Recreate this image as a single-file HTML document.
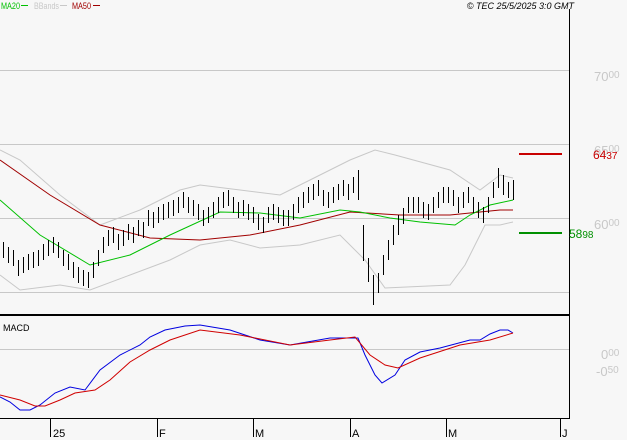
<!DOCTYPE html><html><head><style>body{margin:0;background:#f7f7f7}svg{display:block}text{font-family:"Liberation Sans",sans-serif}</style></head><body>
<svg width="627" height="440" viewBox="0 0 627 440" xmlns="http://www.w3.org/2000/svg">
<rect width="627" height="440" fill="#f7f7f7"/>
<g stroke="#c8c8c8" stroke-width="1">
<line x1="0" y1="70.5" x2="569" y2="70.5"/><line x1="0" y1="144.5" x2="569" y2="144.5"/><line x1="0" y1="218.5" x2="569" y2="218.5"/><line x1="0" y1="292.5" x2="569" y2="292.5"/><line x1="0" y1="349.5" x2="569" y2="349.5"/>
</g>
<g fill="#c8c8c8" font-size="13"><text x="594" y="81">70<tspan font-size="10" dy="-3">00</tspan></text><text x="594" y="155">65<tspan font-size="10" dy="-3">00</tspan></text><text x="594" y="229">60<tspan font-size="10" dy="-3">00</tspan></text><text x="601" y="359">0<tspan font-size="10" dy="-3">00</tspan></text><text x="596" y="376">-0<tspan font-size="10" dy="-3">50</tspan></text></g>
<line x1="569.5" y1="9" x2="569.5" y2="418" stroke="#000"/>
<line x1="0" y1="315" x2="570" y2="315" stroke="#000" stroke-width="2"/>
<line x1="0" y1="418.5" x2="570" y2="418.5" stroke="#000"/>
<g stroke="#000"><line x1="50.5" y1="418" x2="50.5" y2="437"/><line x1="157.5" y1="418" x2="157.5" y2="437"/><line x1="253.5" y1="418" x2="253.5" y2="437"/><line x1="350.5" y1="418" x2="350.5" y2="437"/><line x1="446.5" y1="418" x2="446.5" y2="437"/><line x1="560.5" y1="418" x2="560.5" y2="437"/></g>
<g font-size="11" fill="#000"><text x="53" y="437">25</text><text x="159" y="437">F</text><text x="255" y="437">M</text><text x="352" y="437">A</text><text x="448" y="437">M</text><text x="562" y="437">J</text></g>
<text x="3" y="331" font-size="9" fill="#000">MACD</text>
<g font-size="9"><text x="1" y="9" fill="#00c000" textLength="19" lengthAdjust="spacingAndGlyphs">MA20</text><text x="34" y="9" fill="#c8c8c8" textLength="25" lengthAdjust="spacingAndGlyphs">BBands</text><text x="72" y="9" fill="#a00000" textLength="19" lengthAdjust="spacingAndGlyphs">MA50</text></g>
<line x1="21" y1="5.5" x2="28" y2="5.5" stroke="#00c000"/><line x1="60" y1="5.5" x2="67" y2="5.5" stroke="#c8c8c8"/><line x1="93" y1="5.5" x2="100" y2="5.5" stroke="#a00000"/>
<text x="574" y="9" font-size="9" font-style="italic" text-anchor="end" fill="#000">© TEC 25/5/2025 3:0 GMT</text>
<g fill="none" stroke="#c8c8c8"><polyline points="0,150 20,160 60,195 100,225 140,210 180,190 200,185 240,190 280,195 310,180 350,160 375,150 395,155 450,170 480,190 500,175 513,178"/><polyline points="0,275 20,290 60,285 90,290 130,275 170,260 200,245 230,240 260,248 300,245 340,235 365,260 385,288 450,285 465,265 485,225 500,225 513,222"/></g>
<polyline fill="none" stroke="#a00000" points="0,160 50,195 100,225 150,238 200,240 250,235 300,225 350,212 400,215 450,215 500,210 513,210"/>
<polyline fill="none" stroke="#00c000" points="0,200 40,235 90,265 130,255 170,235 220,212 260,213 300,218 340,210 360,212 390,218 420,222 455,225 470,215 490,205 513,200"/>
<g transform="translate(0.5,0)"><path stroke="#000" fill="none" shape-rendering="crispEdges" d="M3 242v16M8 247v16M13 250v16M18 260v16M23 257v16M28 254v16M33 252v16M38 250v16M43 244v16M48 240v16M53 237v16M58 242v16M63 250v16M68 254v16M73 262v16M78 267v16M83 270v16M88 272v16M93 262v16M98 250v16M103 237v16M108 230v16M113 227v16M118 234v16M123 230v16M128 224v16M133 227v16M138 220v16M143 222v16M148 210v16M153 212v16M158 207v16M163 204v16M168 202v16M173 200v16M178 197v16M183 192v16M188 197v16M193 200v16M198 204v16M203 210v16M208 207v16M213 202v16M218 197v16M223 192v16M228 190v16M233 197v16M238 202v16M243 200v16M248 204v16M253 207v16M258 214v16M263 217v16M268 207v16M273 204v16M278 207v16M283 210v16M288 210v16M293 204v16M298 197v16M303 192v16M308 187v16M313 184v16M318 180v16M323 190v16M328 192v16M333 187v16M338 184v16M343 180v16M348 184v16M353 177v16M358 170v30M363 225v36M368 258v24M373 275v30M378 273v20M383 255v20M388 240v20M393 225v20M398 215v20M403 208v16M408 197v16M413 197v16M418 197v16M423 202v16M428 204v16M433 197v16M438 192v16M443 187v16M448 187v16M453 190v16M458 197v16M463 192v16M468 187v16M473 197v16M478 202v16M483 207v16M488 197v16M493 182v16M498 168v20M503 175v20M508 182v16M513 180v20"/></g>
<line x1="519" y1="154" x2="562" y2="154" stroke="#c80000" stroke-width="2"/>
<text x="593" y="159" font-size="12" fill="#c80000">64<tspan font-size="10">37</tspan></text>
<line x1="519" y1="233" x2="562" y2="233" stroke="#009000" stroke-width="2"/>
<text x="569" y="238" font-size="12" fill="#009000">58<tspan font-size="10">98</tspan></text>
<polyline fill="none" stroke="#0000e0" points="0,397 10,402 20,410 30,410 40,405 55,393 70,387 85,390 100,370 120,355 140,345 150,337 165,330 185,326 200,325 230,330 260,340 290,345 330,338 358,338 365,355 375,375 382,383 395,375 405,360 420,352 440,348 470,340 480,340 490,334 500,330 508,330 513,333"/>
<polyline fill="none" stroke="#d00000" points="0,395 20,400 35,406 45,406 60,400 75,393 95,390 110,380 130,362 150,350 170,340 200,330 240,335 290,345 330,340 355,337 370,355 385,365 398,368 420,358 460,345 490,340 513,333"/>
</svg>
</body></html>
